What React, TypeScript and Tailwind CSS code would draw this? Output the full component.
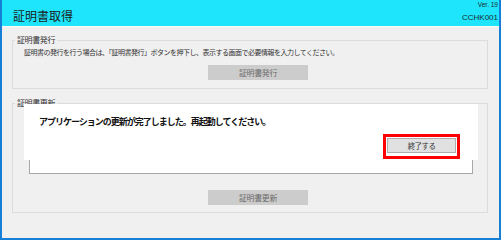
import React from 'react';

const jp = { fontFamily: '"Noto Sans CJK JP", "Noto Sans", sans-serif' };
const en = { fontFamily: '"Liberation Sans", Arial, sans-serif' };

const GrayButton: React.FC<{ label: string }> = ({ label }) => (
  <button
    className="ml-[195px] w-[100px] h-[15px] bg-[#cccccc] text-[#6b6b6b] text-[8px] leading-[15px] tracking-[-0.4px] flex items-center justify-center"
    style={jp}
  >
    {label}
  </button>
);

const App: React.FC = () => {
  return (
    <div className="w-[503px] h-[241px] bg-white">
      <div className="relative w-[501px] h-[240px] border-x-2 border-b-2 border-[#1580d6] bg-[#f0f0f0] flex flex-col">
        {/* header */}
        <div className="h-[26px] bg-[#1ee5fb] flex justify-between pl-[11px] pr-[1px]">
          <div className="pt-[9px] text-[12px] leading-[14px] text-[#1c1c1c]" style={jp}>
            証明書取得
          </div>
          <div className="flex flex-col items-end text-[#1c2b2e]" style={en}>
            <span className="mt-[1px] text-[6.5px] leading-[8px]">Ver. 19</span>
            <span className="mt-[4px] text-[8px] leading-[10px]">CCHK001</span>
          </div>
        </div>
        <div className="h-px bg-[#fafafa]" />

        {/* 証明書発行 */}
        <fieldset className="mt-[8px] ml-[10px] w-[476px] border border-[#dcdcdc] pb-[8px]" style={jp}>
          <legend className="ml-[2px] px-[2px] text-[8px] leading-[10px] tracking-[-0.4px] text-[#333333]">
            証明書発行
          </legend>
          <p className="mt-[2px] ml-[11px] text-[7px] leading-[10px] tracking-[-0.5px] text-[#333333]">
            証明書の発行を行う場合は、「証明書発行」ボタンを押下し、表示する画面で必要情報を入力してください。
          </p>
          <div className="mt-[8px]">
            <GrayButton label="証明書発行" />
          </div>
        </fieldset>

        {/* 証明書更新 */}
        <fieldset className="mt-[9px] ml-[10px] w-[476px] border border-[#dcdcdc] pb-[7px]" style={jp}>
          <legend className="ml-[2px] px-[2px] text-[8px] leading-[10px] tracking-[-0.4px] text-[#333333]">
            証明書更新
          </legend>
          <div className="mt-[5px] ml-[16px] w-[444px] h-[61px] bg-white border border-[#a8a8a8] border-t-[#e0e0e0]" />
          <div className="mt-[16px]">
            <GrayButton label="証明書更新" />
          </div>
        </fieldset>

        {/* completion dialog overlay */}
        <div className="absolute left-[22px] top-[104px] w-[454px] h-[56px] bg-white flex flex-col pl-[15px] pr-[18px] pt-[12px]" style={jp}>
          <p className="text-[9px] leading-[12px] font-bold tracking-[-1px] text-[#111111]">
            アプリケーションの更新が完了しました。再起動してください。
          </p>
          <div className="mt-[6px] flex justify-end">
            <div className="border-[3px] border-[#ff0000] px-[1px] pt-[1px] pb-[3px]">
              <button className="w-[69px] h-[15px] bg-[#e1e1e1] border border-[#adadad] text-[7.5px] leading-[13px] tracking-[-0.6px] text-[#333333] flex items-center justify-center">
                終了する
              </button>
            </div>
          </div>
        </div>
      </div>
    </div>
  );
};

export default App;
